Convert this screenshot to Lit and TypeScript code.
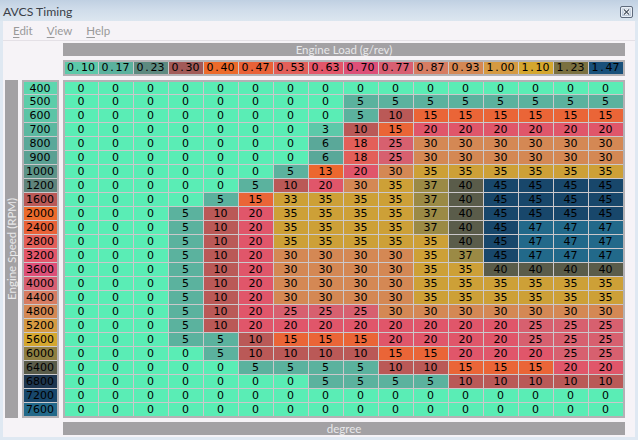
import { LitElement, html, css } from "lit";
import { customElement } from "lit/decorators.js";

const LOADS: [string, string][] = [
  ["0.10", "#5cc9a9"], ["0.17", "#5bb29e"], ["0.23", "#5d8a80"], ["0.30", "#a25a58"],
  ["0.40", "#ec6a2b"], ["0.47", "#e96238"], ["0.53", "#e35f59"], ["0.63", "#e3566a"],
  ["0.70", "#dd4f78"], ["0.77", "#d85f72"], ["0.87", "#d77c62"], ["0.93", "#d48854"],
  ["1.00", "#d59a42"], ["1.10", "#d4a72f"], ["1.23", "#7b7140"], ["1.47", "#18507a"],
];

const RPMS: [string, string][] = [
  ["400", "#5cd6ae"], ["500", "#5ccda9"], ["600", "#5cc4a6"], ["700", "#5bb8a0"],
  ["800", "#5aa899"], ["900", "#5aa193"], ["1000", "#5d9488"], ["1200", "#5f847c"],
  ["1600", "#ba5957"], ["2000", "#ec6a2b"], ["2400", "#e96238"], ["2800", "#e35f59"],
  ["3200", "#e3566a"], ["3600", "#dd4f78"], ["4000", "#d85f72"], ["4400", "#d77c62"],
  ["4800", "#d48854"], ["5200", "#d59a42"], ["5600", "#d4a72f"], ["6000", "#8f7f42"],
  ["6400", "#5a5c4a"], ["6800", "#1e3650"], ["7200", "#18476b"], ["7600", "#22698a"],
];

const CELL: Record<number, string> = {
  0: "#5aedb5", 3: "#5cc9a9", 5: "#5bb29e", 6: "#5aa899", 10: "#ba5957", 13: "#ec672f",
  15: "#ea6537", 18: "#e35f59", 20: "#e0566a", 25: "#d7606f", 30: "#d48854", 33: "#cda036",
  35: "#cda037", 37: "#9b8a45", 40: "#5a5c4a", 45: "#18476b", 47: "#22698a",
};

const z = (n: number) => Array(n).fill(0);
const ROWS: number[][] = [
  z(16),
  [...z(8), 5, 5, 5, 5, 5, 5, 5, 5],
  [...z(8), 5, 10, 15, 15, 15, 15, 15, 15],
  [...z(7), 3, 10, 15, 20, 20, 20, 20, 20, 20],
  [...z(7), 6, 18, 25, 30, 30, 30, 30, 30, 30],
  [...z(7), 6, 18, 25, 30, 30, 30, 30, 30, 30],
  [...z(6), 5, 13, 20, 30, 35, 35, 35, 35, 35, 35],
  [...z(5), 5, 10, 20, 30, 35, 37, 40, 45, 45, 45, 45],
  [0, 0, 0, 0, 5, 15, 33, 35, 35, 35, 37, 40, 45, 45, 45, 45],
  [0, 0, 0, 5, 10, 20, 35, 35, 35, 35, 37, 40, 45, 45, 45, 45],
  [0, 0, 0, 5, 10, 20, 35, 35, 35, 35, 37, 40, 45, 47, 47, 47],
  [0, 0, 0, 5, 10, 20, 35, 35, 35, 35, 35, 40, 45, 47, 47, 47],
  [0, 0, 0, 5, 10, 20, 30, 30, 30, 30, 35, 37, 45, 47, 47, 47],
  [0, 0, 0, 5, 10, 20, 30, 30, 30, 30, 35, 35, 40, 40, 40, 40],
  [0, 0, 0, 5, 10, 20, 30, 30, 30, 30, 35, 35, 35, 35, 35, 35],
  [0, 0, 0, 5, 10, 20, 30, 30, 30, 30, 35, 35, 35, 35, 35, 35],
  [0, 0, 0, 5, 10, 20, 25, 25, 25, 30, 30, 30, 30, 30, 30, 30],
  [0, 0, 0, 5, 10, 20, 20, 20, 20, 20, 20, 20, 20, 25, 25, 25],
  [0, 0, 0, 5, 5, 10, 15, 15, 15, 20, 20, 20, 20, 25, 25, 25],
  [0, 0, 0, 0, 5, 10, 10, 10, 10, 15, 15, 20, 20, 20, 25, 25],
  [0, 0, 0, 0, 0, 5, 5, 5, 5, 10, 10, 15, 15, 15, 20, 20],
  [...z(7), 5, 5, 5, 5, 10, 10, 10, 10, 10],
  z(16),
  z(16),
];

@customElement("app-root")
export class AppRoot extends LitElement {
  static styles = css`
    :host {
      display: block;
      width: 638px;
      height: 440px;
      overflow: hidden;
      font-family: "Lato", "Noto Sans", sans-serif;
    }
    .window {
      width: 638px;
      height: 440px;
      box-sizing: border-box;
      display: flex;
      flex-direction: column;
      background: #dfe8f2;
      padding: 0 3px 3px 3px;
    }
    .title {
      height: 21px;
      box-sizing: border-box;
      margin: 0 -3px;
      padding: 2px 5px 0 3px;
      flex: none;
      display: flex;
      align-items: center;
      justify-content: space-between;
      background: linear-gradient(180deg, #c0d0e2 0%, #cfdcea 45%, #dce6f0 100%);
      color: #3a4048;
      font-size: 12.2px;
    }
    .close {
      width: 11px;
      height: 10px;
      border: 1px solid #5e6a7c;
      border-radius: 2px;
      background: linear-gradient(180deg, #d6dfea, #b4c2d4);
      display: flex;
      box-shadow: inset 0 0 0 1px #e9eff6;
    }
    .close svg { display: block; width: 11px; height: 10px; }
    .body {
      flex: 1;
      min-height: 0;
      background: #f6f3f7;
      display: flex;
      flex-direction: column;
    }
    .menu {
      height: 20px;
      flex: none;
      box-sizing: border-box;
      border-bottom: 1px solid #e4e0e6;
      display: flex;
      align-items: center;
      gap: 14px;
      padding-left: 10px;
      color: #999;
      font-size: 11.5px;
    }
    .menu u { text-underline-offset: 2px; }
    .content {
      flex: 1;
      display: grid;
      grid-template-columns: 13px 37px 562px;
      column-gap: 4px;
      grid-template-rows: 13px 16px 338px 13px;
      row-gap: 4px;
      padding: 2px 0 0 2px;
      align-content: start;
    }
    .bar {
      background: #a3a1a4;
      color: #e8e8ea;
      font-size: 11.5px;
      line-height: 13px;
      text-align: center;
      white-space: nowrap;
      overflow: hidden;
    }
    .hbar { grid-column: 3; }
    .hbar.top { grid-row: 1; }
    .hbar.bottom { grid-row: 4; }
    .vbar {
      grid-column: 1;
      grid-row: 3;
      writing-mode: vertical-rl;
      transform: rotate(180deg);
    }
    .num {
      font-family: "DejaVu Sans", sans-serif;
      font-size: 11px;
      color: #000;
      text-align: center;
      padding-right: 1px;
      box-sizing: border-box;
    }
    .dot { display: inline-block; width: 7px; text-align: center; }
    .box {
      border: 2px solid #b3b1b4;
      background: #cbc8cb;
      box-sizing: border-box;
      display: grid;
      gap: 1px;
      align-content: start;
    }
    .load {
      grid-column: 3;
      grid-row: 2;
      grid-template-columns: 33px repeat(15, 34px);
    }
    .load .num { height: 12px; line-height: 12px; }
    .rpm {
      grid-column: 2;
      grid-row: 3;
      grid-template-rows: 12px repeat(23, 13px);
    }
    .rpm .num { line-height: 13px; }
    .grid {
      grid-column: 3;
      grid-row: 3;
      grid-template-columns: 33px repeat(15, 34px);
      grid-template-rows: 12px repeat(23, 13px);
    }
    .grid .num { line-height: 13px; }
  `;

  private load(t: string) {
    const [a, b] = t.split(".");
    return html`${a}<span class="dot">.</span>${b}`;
  }

  render() {
    return html`
      <div class="window">
        <div class="title">
          <span>AVCS Timing</span>
          <span class="close">
            <svg viewBox="0 0 11 10" aria-hidden="true">
              <path d="M3 2.5 L8 7.5 M8 2.5 L3 7.5" stroke="#fff" stroke-width="3" />
              <path d="M3 2.5 L8 7.5 M8 2.5 L3 7.5" stroke="#4a5462" stroke-width="1.1" />
            </svg>
          </span>
        </div>
        <div class="body">
          <div class="menu">
            <span><u>E</u>dit</span>
            <span><u>V</u>iew</span>
            <span><u>H</u>elp</span>
          </div>
          <div class="content">
            <div class="bar hbar top">Engine Load (g/rev)</div>
            <div class="box load">
              ${LOADS.map(([t, c]) => html`<div class="num" style="background:${c}">${this.load(t)}</div>`)}
            </div>
            <div class="bar vbar">Engine Speed (RPM)</div>
            <div class="box rpm">
              ${RPMS.map(([t, c]) => html`<div class="num" style="background:${c}">${t}</div>`)}
            </div>
            <div class="box grid">
              ${ROWS.map((r) => r.map((v) => html`<div class="num" style="background:${CELL[v]}">${v}</div>`))}
            </div>
            <div class="bar hbar bottom">degree</div>
          </div>
        </div>
      </div>
    `;
  }
}
